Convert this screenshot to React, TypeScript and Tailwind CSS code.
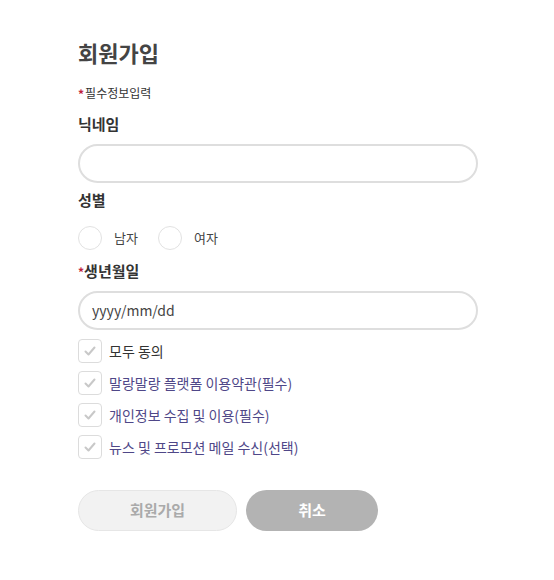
import React from "react";

const Check = () => (
  <svg width="14" height="14" viewBox="0 0 14 14" fill="none">
    <path d="M2.5 7.5 L5.5 10.5 L11.5 3.5" stroke="#c8c8c8" strokeWidth="2" strokeLinecap="round" strokeLinejoin="round" />
  </svg>
);

const CheckRow = ({ label, purple }: { label: string; purple?: boolean }) => (
  <div className="flex items-center h-[32px]">
    <div className="w-[24px] h-[24px] rounded-[4px] border border-[#dcdcdc] flex items-center justify-center bg-white">
      <Check />
    </div>
    <span className={`ml-[7px] text-[14px] ${purple ? "text-[#4f4788]" : "text-[#333]"}`}>{label}</span>
  </div>
);

export default function App() {
  return (
    <div
      className="w-[554px] h-[580px] bg-white pl-[78px] pt-[36px]"
      style={{ fontFamily: '"Noto Sans CJK KR", "Noto Sans", sans-serif' }}
    >
      <h1 className="text-[22px] font-bold text-[#444] leading-[32px]">회원가입</h1>
      <div className="mt-[14px] flex items-center text-[12px] text-[#333] leading-[18px]">
        <span className="text-[#c0223b] text-[12px] font-bold mr-[1px] mt-[3px]">*</span>필수정보입력
      </div>
      <div className="mt-[10px] text-[15px] font-bold text-[#333] leading-[22px]">닉네임</div>
      <input
        className="mt-[9px] block w-[400px] h-[39px] rounded-full border-2 border-[#dedede] outline-none px-[14px] text-[14px]"
      />
      <div className="mt-[6px] text-[15px] font-bold text-[#333] leading-[22px]">성별</div>
      <div className="mt-[15px] flex items-center h-[24px]">
        <div className="w-[24px] h-[24px] rounded-full border border-[#e2e2e2]" />
        <span className="ml-[12px] text-[13px] text-[#444]">남자</span>
        <div className="ml-[20px] w-[24px] h-[24px] rounded-full border border-[#e2e2e2]" />
        <span className="ml-[12px] text-[13px] text-[#444]">여자</span>
      </div>
      <div className="mt-[8px] flex items-center text-[15px] font-bold text-[#333] leading-[22px]">
        <span className="text-[#c0223b] text-[12px] mt-[3px]">*</span>생년월일
      </div>
      <div className="mt-[8px] w-[400px] h-[39px] rounded-full border-2 border-[#dedede] flex items-center px-[12px] text-[14px] text-[#444]">
        yyyy/mm/dd
      </div>
      <div className="mt-[5px] flex flex-col">
        <CheckRow label="모두 동의" />
        <CheckRow label="말랑말랑 플랫폼 이용약관(필수)" purple />
        <CheckRow label="개인정보 수집 및 이용(필수)" purple />
        <CheckRow label="뉴스 및 프로모션 메일 수신(선택)" purple />
      </div>
      <div className="mt-[27px] flex gap-[9px]">
        <button className="w-[159px] h-[41px] rounded-full bg-[#f2f2f2] border border-[#e6e6e6] text-[15px] font-bold text-[#aaa]">
          회원가입
        </button>
        <button className="w-[132px] h-[41px] rounded-full bg-[#b3b3b3] text-[15px] font-bold text-white">
          취소
        </button>
      </div>
    </div>
  );
}
